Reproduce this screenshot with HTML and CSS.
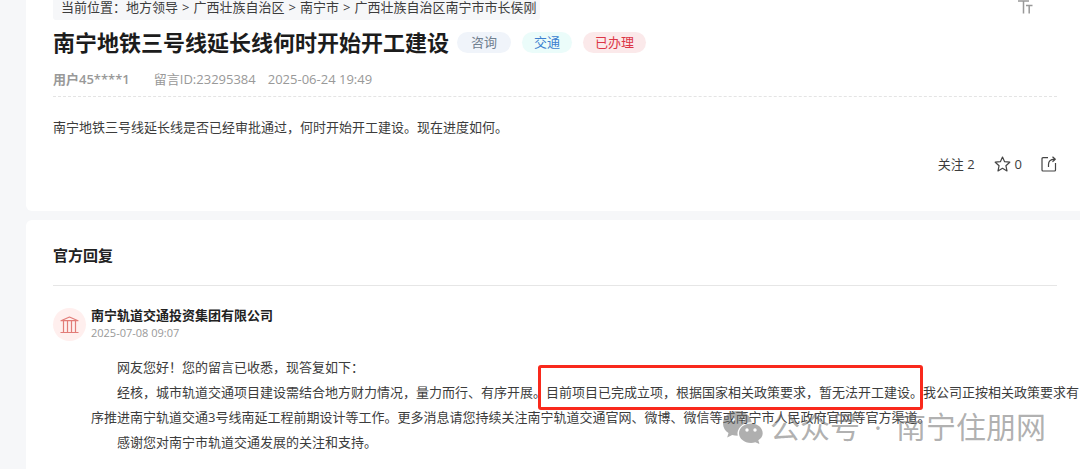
FILE: index.html
```html
<!DOCTYPE html>
<html lang="zh-CN">
<head>
<meta charset="utf-8">
<meta name="viewport" content="width=device-width, initial-scale=1">
<title>南宁地铁三号线延长线何时开始开工建设</title>
<link rel="stylesheet" href="styles.css">
</head>
<body>
<main class="page">
  <article class="card question">
    <div class="topbar">
      <nav class="breadcrumb" aria-label="当前位置">
        <span>当前位置：</span><a href="#">地方领导</a><span class="sep">&gt;</span><a href="#">广西壮族自治区</a><span class="sep">&gt;</span><a href="#">南宁市</a><span class="sep">&gt;</span><a href="#">广西壮族自治区南宁市市长侯刚</a>
      </nav>
      <button class="font-size" type="button" aria-label="字号">
        <svg width="16" height="14" viewBox="0 0 16 14" fill="none" stroke="#999" stroke-width="1.5"><path d="M1 1h11M6.500 1v12.500M9 5.500h6.500M12.200 5.500v8"/></svg>
      </button>
    </div>
    <header class="title-row">
      <h1 class="title">南宁地铁三号线延长线何时开始开工建设</h1>
      <ul class="tags">
        <li class="tag tag-type">咨询</li>
        <li class="tag tag-field">交通</li>
        <li class="tag tag-done">已办理</li>
      </ul>
    </header>
    <div class="meta">
      <span class="user">用户45****1</span>
      <span class="message-id">留言ID:23295384</span>
      <time>2025-06-24 19:49</time>
    </div>
    <p class="question-text">南宁地铁三号线延长线是否已经审批通过，何时开始开工建设。现在进度如何。</p>
    <div class="actions">
      <button class="action" type="button">关注 2</button>
      <button class="action" type="button">
        <svg width="17" height="16" viewBox="0 0 17 16" fill="none" stroke="#444" stroke-width="1.2" stroke-linejoin="round"><path d="M8.5 1l2.1 4.700 5.200.5-3.900 3.500 1.100 5.200-4.500-2.600L4 14.900l1.100-5.200L1.200 6.200l5.200-.5z"/></svg>
        0
      </button>
      <button class="action" type="button" aria-label="分享">
        <svg width="16" height="16" viewBox="0 0 16 16" fill="none" stroke="#444" stroke-width="1.2" stroke-linejoin="round"><path d="M7 1.700H2Q1 1.700 1 2.700V14q0 1 1 1h11.500q1 0 1-1V7"/><path d="M7.500 11V8.500q0-5 6-5.300M11.500.7L14.300 3.200 11.500 5.700"/></svg>
      </button>
    </div>
  </article>

  <section class="card reply">
    <h2 class="section-title">官方回复</h2>
    <div class="reply-item">
      <div class="avatar">
        <svg width="19" height="18" viewBox="0 0 19 18" fill="none" stroke="#e27c78" stroke-width="1.200" stroke-linejoin="round"><path d="M1 4.700L9.500 1 18 4.700zM3.500 5v11M7.500 5v11M11.500 5v11M15.500 5v11M.5 16.500h18"/></svg>
      </div>
      <div class="reply-main">
        <h3 class="org">南宁轨道交通投资集团有限公司</h3>
        <time class="reply-time">2025-07-08 09:07</time>
        <div class="reply-text">
          <p>网友您好！您的留言已收悉，现答复如下：</p>
          <p>经核，城市轨道交通项目建设需结合地方财力情况，量力而行、有序开展。<mark class="key">目前项目已完成立项，根据国家相关政策要求，暂无法开工建设。</mark>我公司正按相关政策要求有序推进南宁轨道交通3号线南延工程前期设计等工作。更多消息请您持续关注南宁轨道交通官网、微博、微信等或南宁市人民政府官网等官方渠道。</p>
          <p>感谢您对南宁市轨道交通发展的关注和支持。</p>
        </div>
      </div>
    </div>
    <div class="watermark">
      <svg width="40" height="33" viewBox="0 0 40 33"><path fill="currentColor" fill-rule="evenodd" d="M15 0C6.500 0 0 5.500 0 12.500c0 4 2.100 7.300 5.500 9.600L4.200 26.500l5-2.600c1.800.5 3.500.8 5.500.8-1.500-7 5-13.700 14-13.400C27.500 4.500 21.500 0 15 0zM9.800 6.500a2 2 0 1 1 0 4 2 2 0 0 1 0-4zm10 0a2 2 0 1 1 0 4 2 2 0 0 1 0-4zM28 12.500c-6.800 0-12 4.300-12 9.700s5.200 9.700 12 9.700c1.500 0 3-.3 4.300-.7L36.500 33l-1.200-3.700c2.800-1.800 4.400-4.300 4.400-7.100 0-5.400-5-9.700-11.700-9.700zM24 17.300a1.700 1.700 0 1 1 0 3.400 1.700 1.700 0 0 1 0-3.400zm8 0a1.700 1.700 0 1 1 0 3.400 1.700 1.700 0 0 1 0-3.400z"/></svg>
      <span>公众号</span><span class="dot">·</span><span>南宁住朋网</span>
    </div>
  </section>
</main>
</body>
</html>
```

FILE: styles.css
```css
* {
  box-sizing: border-box;
}

body,
h1,
h2,
h3,
p,
ul {
  margin: 0;
  padding: 0;
}

body {
  background: #f6f7f9;
  color: #3c3c3c;
  font: 13px/18px "Open Sans", "Noto Sans CJK SC", sans-serif;
  overflow-x: hidden;
}

button {
  padding: 0;
  border: 0;
  background: none;
  color: inherit;
  font: inherit;
}

svg {
  display: block;
}

a {
  color: inherit;
  text-decoration: none;
}

.page {
  display: flex;
  flex-direction: column;
  gap: 9px;
  min-height: 100vh;
  padding-left: 26px;
}

.card {
  padding: 0 23px 0 27px;
  border-radius: 6px 0 0 6px;
  background: #fff;
}

.question {
  padding-bottom: 38px;
  border-top-left-radius: 0;
}

.topbar {
  display: flex;
  align-items: flex-start;
  justify-content: space-between;
}

.breadcrumb {
  padding: 0 4px 6px 8px;
  border-radius: 0 0 3px 3px;
  background: #f6f7f9;
  line-height: 14px;
}

.sep {
  margin: 0 4px;
}

.font-size {
  margin-right: 24px;
}

.title-row {
  display: flex;
  align-items: center;
  gap: 8px;
  margin-top: 8px;
}

.title {
  color: #1c1c1c;
  font-size: 22px;
  line-height: 28px;
}

.tags {
  display: flex;
  gap: 11px;
  list-style: none;
}

.tag {
  padding: 0 12px;
  border-radius: 11px;
  line-height: 21px;
}

.tag-type {
  padding: 0 14px;
  background: #f0f4fa;
  color: #708090;
}

.tag-field {
  background: #ebfcfa;
  color: #3c7fd0;
}

.tag-done {
  background: #fbe9ea;
  color: #dc3545;
}

.meta {
  display: flex;
  gap: 12px;
  margin-top: 14px;
  padding-bottom: 8px;
  border-bottom: 1px dashed #e4e4e4;
  color: #999;
}

.user {
  margin-right: 12px;
  font-weight: 600;
}

.question-text {
  margin-top: 21px;
}

.actions {
  display: flex;
  justify-content: flex-end;
  gap: 19px;
  margin-top: 19px;
}

.action {
  display: flex;
  align-items: center;
  gap: 4px;
}

.reply {
  position: relative;
  flex: 1;
  padding-top: 24px;
  border-bottom-left-radius: 0;
}

.section-title {
  padding-bottom: 19px;
  border-bottom: 1px solid #e6e6e6;
  color: #222;
  font-size: 15px;
  line-height: 22px;
}

.reply-item {
  display: flex;
  gap: 5px;
  margin: 20px -23px 0 0;
}

.avatar {
  display: grid;
  flex: none;
  place-items: center;
  width: 33px;
  height: 33px;
  margin-top: 2px;
  border-radius: 50%;
  background: #ffefee;
}

.org {
  color: #222;
  font-size: 13px;
  line-height: 18px;
}

.reply-time {
  display: block;
  color: #999;
  font-size: 11px;
  line-height: 18px;
}

.reply-text {
  margin-top: 13px;
  line-height: 25px;
}

.reply-text p {
  text-indent: 2em;
}

.key {
  position: relative;
  background: none;
  color: inherit;
}

.key::after {
  position: absolute;
  inset: -18px 0 -9px -8px;
  border: 3px solid #f9291c;
  border-radius: 3px;
  content: "";
}

.watermark {
  position: absolute;
  right: 34px;
  bottom: 20px;
  display: flex;
  align-items: center;
  color: rgba(110, 110, 110, 0.55);
  font-size: 30px;
  line-height: 44px;
}

.watermark svg {
  margin-right: 7px;
}

.dot {
  width: 36px;
  text-align: center;
}
```
